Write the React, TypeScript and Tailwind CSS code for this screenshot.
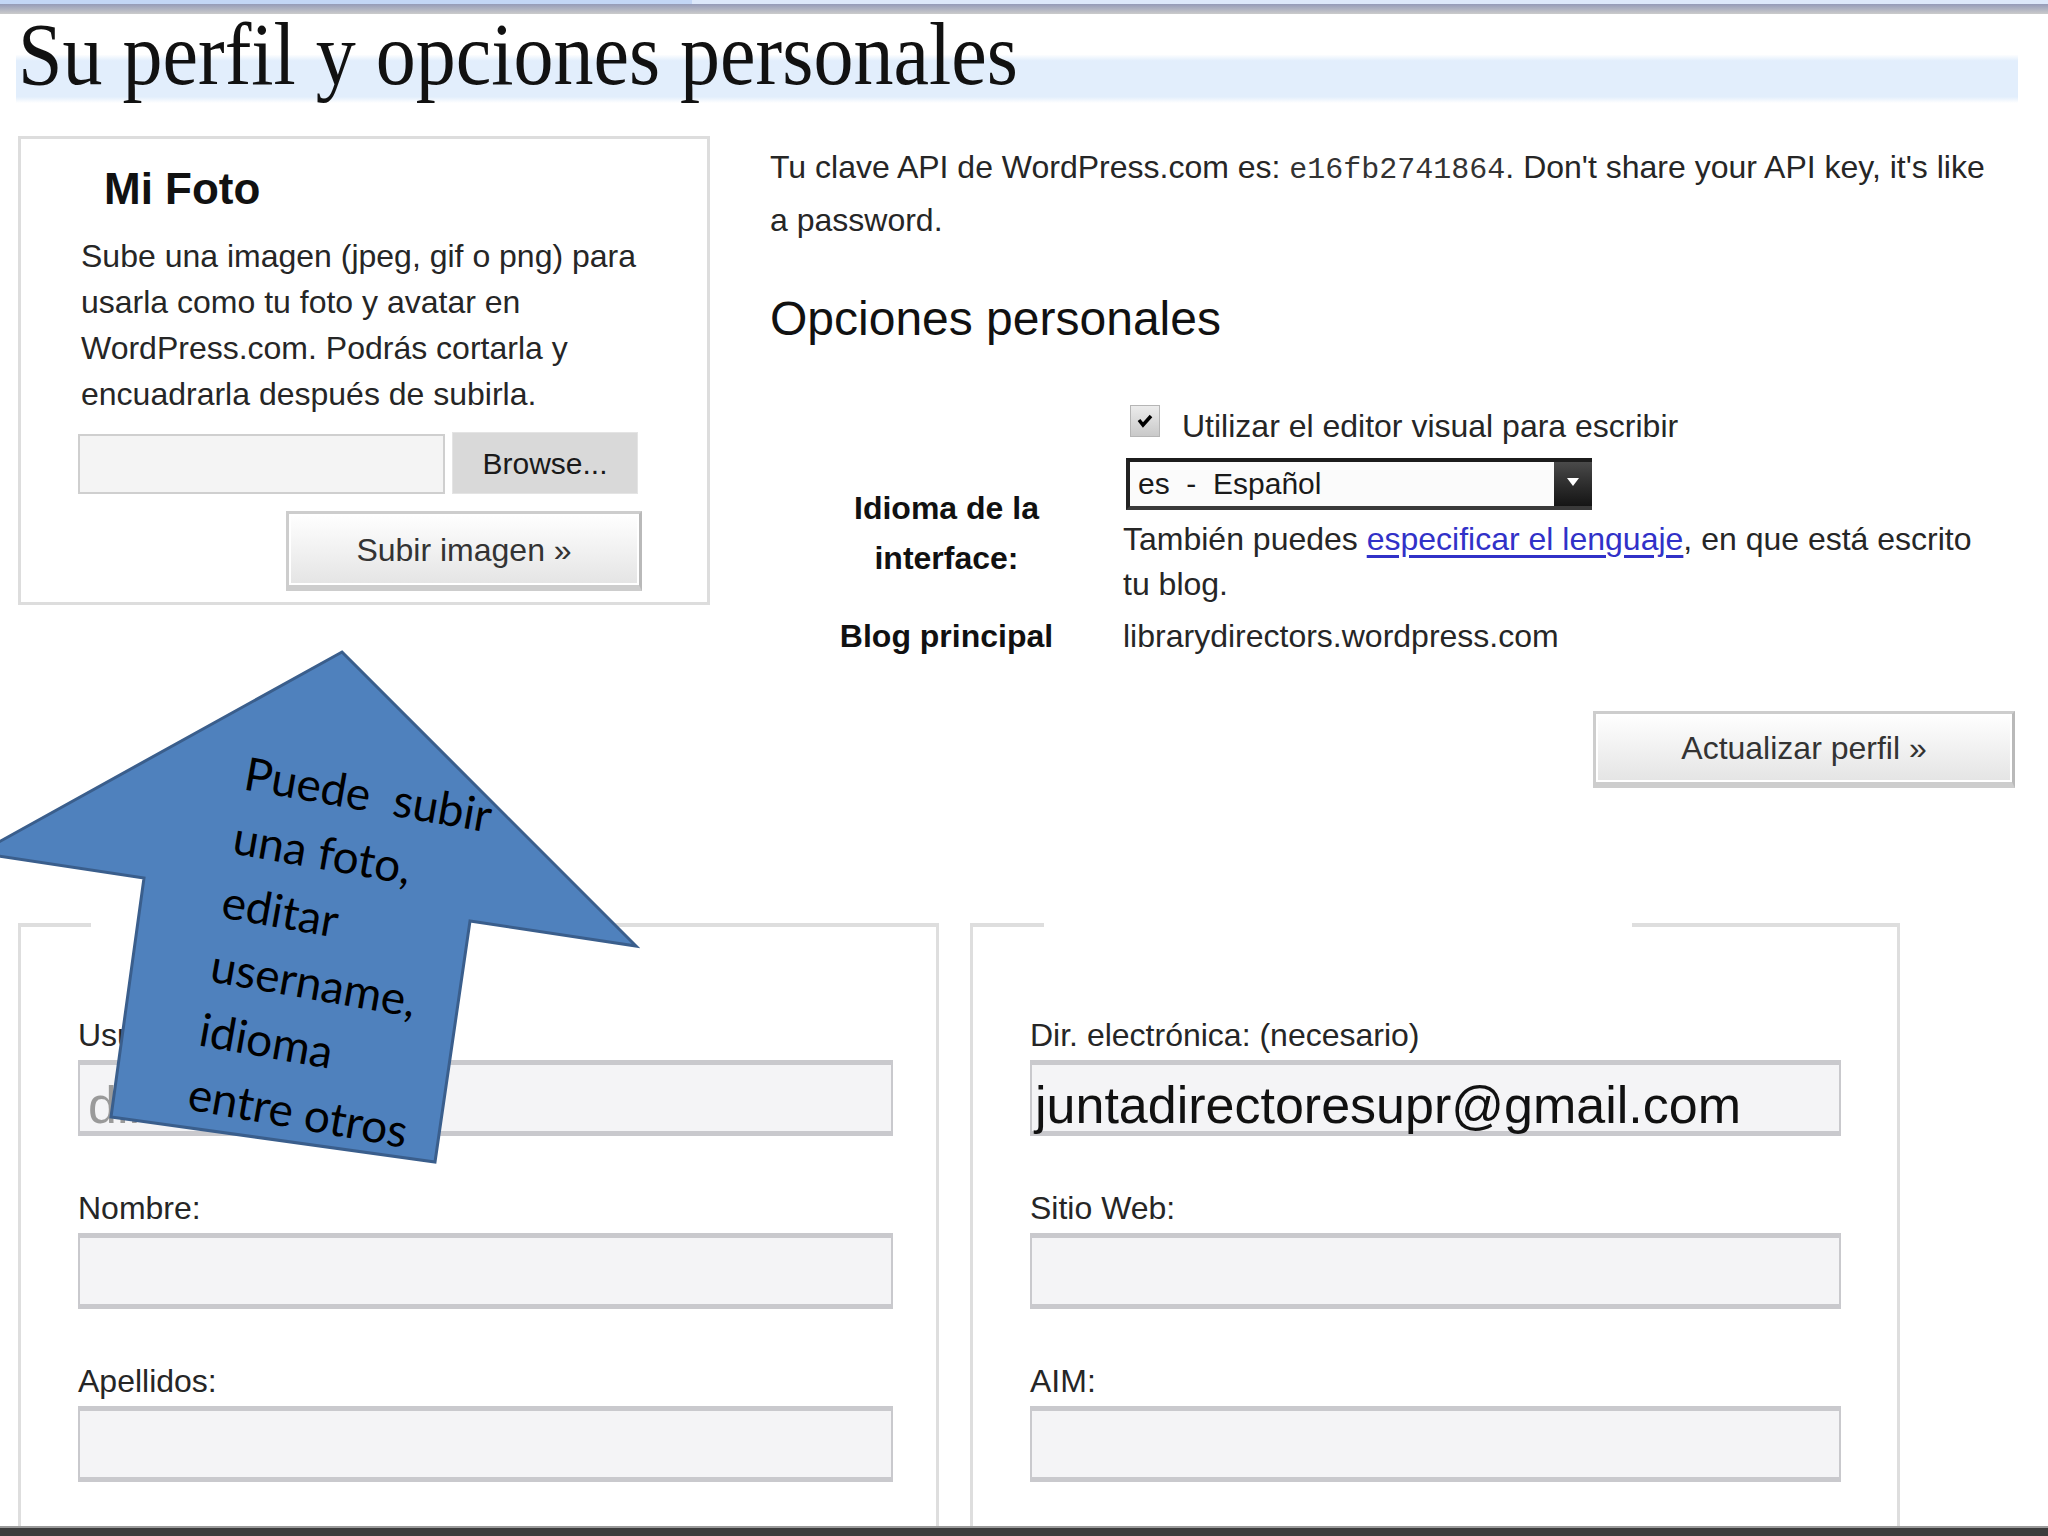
import React from 'react';

const GrayButton: React.FC<{ children: React.ReactNode; className?: string }> = ({ children, className }) => {
  return (
    <div
      className={`flex shrink-0 items-center justify-center border-[3px] border-b-[6px] border-[#cdcdcd] border-r-[#b9b9b9] bg-gradient-to-b from-[#ffffff] to-[#e4e4e4] text-[32px] text-[#333] shadow-[inset_0_0_0_2px_#ffffff] ${className ?? ''}`}
    >
      {children}
    </div>
  );
};

const Field: React.FC<{ label: string; value?: string; muted?: boolean; width: string }> = ({ label, value, muted, width }) => {
  return (
    <div className="flex flex-col">
      <div className="h-[40px] text-[32px] leading-[40px]">{label}</div>
      <div
        className={`mt-[5px] h-[76px] ${width} border-x-2 border-y-[5px] border-[#c9c9cd] bg-[#f4f4f6] pl-[3px] pt-[10px] text-[52px] leading-[60px] whitespace-nowrap ${muted ? 'pl-[8px] text-[#9a9a9a]' : 'text-[#111]'}`}
      >
        {value}
      </div>
    </div>
  );
};

const FieldBox: React.FC<{ width: string; seg: string; gap: string; pad: string; children: React.ReactNode }> = ({ width, seg, gap, pad, children }) => {
  return (
    <div className={`flex ${width} flex-col`}>
      <div className="flex h-[4px] shrink-0">
        <div className={`${seg} bg-[#dedede]`} />
        <div className={gap} />
        <div className="flex-1 bg-[#dedede]" />
      </div>
      <div className={`flex flex-1 flex-col gap-[52px] border-x-[3px] border-[#dedede] ${pad} pt-[88px]`}>{children}</div>
    </div>
  );
};

const MiFoto: React.FC = () => {
  return (
    <div className="h-[469px] w-[692px] shrink-0 self-start border-[3px] border-[#dddddd] pt-[25px]">
      <h2 className="pl-[83px] text-[44px] font-bold leading-[50px] text-[#111]">Mi Foto</h2>
      <p className="mt-[19px] pl-[60px] text-[32px] leading-[46px]">
        Sube una imagen (jpeg, gif o png) para
        <br />
        usarla como tu foto y avatar en
        <br />
        WordPress.com. Podrás cortarla y
        <br />
        encuadrarla después de subirla.
      </p>
      <div className="mt-[15px] flex items-start pl-[57px]">
        <div className="mt-[2px] h-[60px] w-[367px] border-2 border-[#cfcfcf] bg-[#f4f4f4]" />
        <div className="ml-[7px] flex h-[62px] w-[186px] items-center justify-center border border-[#e4e4e4] bg-[#d9d9d9] text-[30px] text-[#1a1a1a]">
          Browse...
        </div>
      </div>
      <GrayButton className="ml-[265px] mt-[17px] h-[80px] w-[356px]">Subir imagen »</GrayButton>
    </div>
  );
};

const Opciones: React.FC = () => {
  return (
    <div className="ml-[60px] flex w-[1248px] flex-col pt-[6px]">
      <p className="text-[32px] leading-[50px]">
        Tu clave API de WordPress.com es:{' '}
        <span className="font-['Liberation_Mono','Courier_New',monospace] text-[30px] text-[#333]">e16fb2741864</span>. Don't share your API key,
        it's like
        <br />
        a password.
      </p>
      <h3 className="mt-[46px] text-[48px] leading-[56px] text-[#111]">Opciones personales</h3>

      <div className="mt-[58px] flex">
        <div className="w-[353px]" />
        <div className="flex items-start">
          <div className="ml-[7px] flex h-[32px] w-[30px] items-center justify-center border border-[#b5b5b5] bg-gradient-to-b from-[#ececec] to-[#c9c9c9]">
            <svg width="18" height="16" viewBox="0 0 18 16">
              <path d="M3 7 L7 12 L15 3" fill="none" stroke="#000" strokeWidth="3.5" />
            </svg>
          </div>
          <span className="ml-[22px] mt-[1px] text-[32px] leading-[40px]">Utilizar el editor visual para escribir</span>
        </div>
      </div>

      <div className="mt-[12px] flex">
        <div className="flex w-[353px] items-center justify-center text-center text-[32px] font-bold leading-[50px] text-[#111]">
          Idioma de la
          <br />
          interface:
        </div>
        <div className="flex flex-col">
          <div className="ml-[3px] flex h-[52px] w-[466px] border-y-4 border-l-4 border-t-[#1c1c1c] border-b-[#3a3a3a] border-l-[#222] bg-[#fbfbfb]">
            <span className="flex-1 whitespace-pre pl-[8px] text-[30px] leading-[44px] text-[#1a1a1a]">es  -  Español</span>
            <div className="flex w-[38px] justify-center bg-gradient-to-b from-[#4a4a4a] to-[#151515] pt-[14px]">
              <svg width="16" height="12" viewBox="0 0 16 12">
                <path d="M2 2 H14 L8 10 Z" fill="#ffffff" />
              </svg>
            </div>
          </div>
          <p className="mt-[7px] text-[32px] leading-[45px]">
            También puedes{' '}
            <span className="text-[#3131c8] underline decoration-[#3131c8] underline-offset-[5px]">especificar el lenguaje</span>, en que está escrito
            <br />
            tu blog.
          </p>
        </div>
      </div>

      <div className="mt-[9px] flex">
        <div className="w-[353px] text-center text-[32px] font-bold leading-[40px] text-[#111]">Blog principal</div>
        <div className="text-[32px] leading-[40px]">librarydirectors.wordpress.com</div>
      </div>

      <GrayButton className="mr-[3px] mt-[55px] h-[77px] w-[422px] self-end">Actualizar perfil »</GrayButton>
    </div>
  );
};

export default function App() {
  return (
    <div className="relative flex h-[1536px] w-[2048px] flex-col overflow-hidden bg-white font-['Liberation_Sans',Arial,sans-serif] text-[#262626]">
      <div className="flex h-[4px] shrink-0">
        <div className="w-[692px] bg-[#c3d6f6]" />
        <div className="flex-1 bg-[#dde8fa]" />
      </div>
      <div className="h-[10px] shrink-0 bg-gradient-to-b from-[#959bb8] to-[#cbcbcb]" />

      <div className="ml-[16px] h-[90px] w-[2002px] shrink-0 bg-[linear-gradient(to_bottom,#ffffff_0%,#ffffff_45%,#e2eefc_52%,#e2eefc_92%,#ffffff_99%)] pl-[2px] pt-[4px]">
        <h1 className="origin-bottom scale-y-110 font-['Liberation_Serif','Times_New_Roman',serif] text-[80px] leading-[80px] text-[#111]">
          Su perfil y opciones personales
        </h1>
      </div>

      <div className="mt-[32px] flex shrink-0 pl-[18px]">
        <MiFoto />
        <Opciones />
      </div>

      <div className="mt-[135px] flex min-h-0 flex-1 gap-[31px] pl-[18px]">
        <FieldBox width="w-[921px]" seg="w-[73px]" gap="w-[523px]" pad="pl-[57px]">
          <Field label="Usuario:" value="directores" muted width="w-[815px]" />
          <Field label="Nombre:" width="w-[815px]" />
          <Field label="Apellidos:" width="w-[815px]" />
        </FieldBox>
        <FieldBox width="w-[930px]" seg="w-[74px]" gap="w-[588px]" pad="pl-[57px]">
          <Field label="Dir. electrónica: (necesario)" value="juntadirectoresupr@gmail.com" width="w-[811px]" />
          <Field label="Sitio Web:" width="w-[811px]" />
          <Field label="AIM:" width="w-[811px]" />
        </FieldBox>
      </div>
      <div className="h-[10px] shrink-0 border-t-2 border-[#9a9a9a] bg-[#3c3c3c]" />

      {/* callout arrow */}
      <svg className="pointer-events-none absolute left-0 top-0 overflow-visible" width="700" height="1200" viewBox="0 0 700 1200">
        <polygon
          points="342,652 636,946 470,921 435,1162 111,1117 144,878 -21,853"
          fill="#4f81bd"
          stroke="#3a5e8c"
          strokeWidth="3"
        />
      </svg>
      <div className="pointer-events-none absolute left-[251px] top-[740px] origin-top-left rotate-[10deg] whitespace-pre font-['Lato','Open_Sans',sans-serif] text-[46px] leading-[65px] text-black">
        {'Puede  subir'}
        <br />
        una foto,
        <br />
        editar
        <br />
        username,
        <br />
        idioma
        <br />
        entre otros
      </div>
    </div>
  );
}
